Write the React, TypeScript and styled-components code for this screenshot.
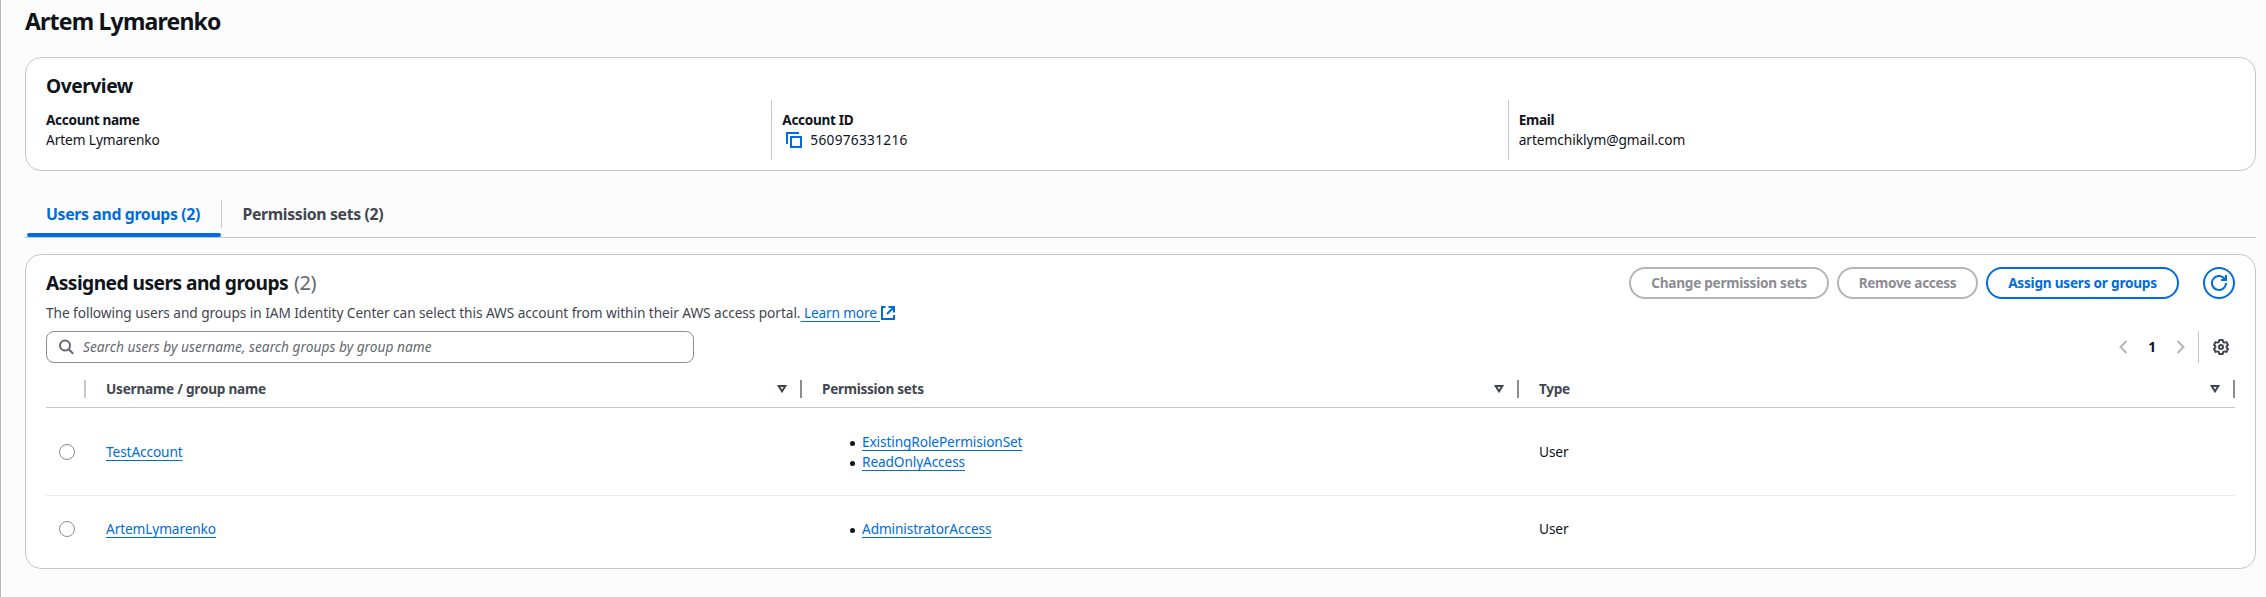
import React from "react";
import styled, { createGlobalStyle } from "styled-components";

const GlobalStyle = createGlobalStyle`
  * { box-sizing: border-box; }
  body {
    margin: 0;
    background: #fcfcfd;
    color: #0f141a;
    font-family: "Noto Sans", "Open Sans", sans-serif;
    font-size: 13.7px;
    line-height: 20px;
    letter-spacing: -0.1px;
  }
  h1, h2, ul { margin: 0; padding: 0; }
`;

const Page = styled.main`
  height: 597px;
  border-left: 1px solid #b9b9c2;
  padding: 6px 10px 0 24px;
  overflow: hidden;
  white-space: nowrap;
`;

const PageTitle = styled.h1`
  font-size: 23px;
  line-height: 30px;
  letter-spacing: -0.8px;
`;

const Card = styled.section<{ $top: number }>`
  margin-top: ${(p) => p.$top}px;
  border: 1px solid #c6c6cd;
  border-radius: 16px;
  background: #fff;
  padding: 0 20px;
`;

const SectionTitle = styled.h2<{ $ls: number }>`
  font-size: 19.2px;
  line-height: 24px;
  letter-spacing: ${(p) => p.$ls}px;
`;

const OverviewCard = styled(Card)`
  padding: 16px 20px 10px;
`;

const Details = styled.div`
  display: grid;
  grid-template-columns: repeat(3, 1fr);
  gap: 20px;
  margin-top: 2px;
`;

const Detail = styled.div`
  padding: 10px 0;
  & + & {
    margin-left: -11px;
    padding-left: 10px;
    border-left: 1px solid #c6c6cd;
  }
`;

const DetailLabel = styled.div`
  font-size: 13.6px;
  font-weight: 700;
  letter-spacing: -0.32px;
`;

const DetailValue = styled.div<{ $ls?: number }>`
  display: flex;
  align-items: center;
  letter-spacing: ${(p) => p.$ls ?? -0.1}px;
  svg { margin: 0 8px 0 4px; }
`;

const Tabs = styled.nav`
  display: flex;
  height: 38px;
  margin-top: 29px;
  padding-left: 2px;
  border-bottom: 1px solid #c6c6cd;
`;

const Tab = styled.div<{ $active?: boolean; $width: number }>`
  width: ${(p) => p.$width}px;
  display: flex;
  flex-direction: column;
  justify-content: space-between;
  font-size: 15.8px;
  font-weight: 700;
  line-height: 28px;
  letter-spacing: -0.34px;
  color: ${(p) => (p.$active ? "#006ce0" : "#424650")};
  &::after {
    content: "";
    height: 4px;
    border-radius: 2px;
    background: ${(p) => (p.$active ? "#006ce0" : "transparent")};
  }
`;

const TabLabel = styled.span<{ $pad: number }>`
  padding-left: ${(p) => p.$pad}px;
`;

const TabDivider = styled.i`
  width: 1px;
  height: 28px;
  background: #c6c6cd;
`;

const TableHeader = styled.header`
  display: flex;
  justify-content: space-between;
  padding-top: 12px;
`;

const HeaderText = styled.div`
  padding-top: 4px;
`;

const Counter = styled.span`
  font-weight: 400;
  font-size: 20px;
  letter-spacing: -0.5px;
  color: #656871;
  margin-left: 6px;
`;

const Description = styled.p`
  margin: 8px 0;
  display: flex;
  align-items: center;
  color: #424650;
  letter-spacing: -0.066px;
`;

const Link = styled.a<{ $ls?: number }>`
  color: #006ce0;
  white-space: pre;
  letter-spacing: ${(p) => p.$ls ?? -0.12}px;
  text-decoration: underline;
  text-decoration-thickness: 1px;
  text-underline-offset: 3px;
  text-decoration-skip-ink: none;
`;

const Actions = styled.div`
  display: flex;
  gap: 8px;
`;

const Button = styled.button<{ $width: number; $disabled?: boolean; $ls?: number }>`
  width: ${(p) => p.$width}px;
  height: 32px;
  padding: 0;
  border: 2px solid ${(p) => (p.$disabled ? "#b4b4bb" : "#006ce0")};
  border-radius: 16px;
  background: #fff;
  color: ${(p) => (p.$disabled ? "#8c8c94" : "#006ce0")};
  font: 700 13.6px/20px "Noto Sans", sans-serif;
  letter-spacing: ${(p) => p.$ls ?? -0.3}px;
  display: flex;
  align-items: center;
  justify-content: center;
`;

const RefreshButton = styled(Button)`
  margin-left: 16px;
`;

const Toolbar = styled.div`
  display: flex;
  justify-content: space-between;
  height: 32px;
`;

const Search = styled.label`
  width: 648px;
  display: flex;
  align-items: center;
  gap: 8px;
  padding-left: 12px;
  border: 1px solid #8c8c94;
  border-radius: 8px;
  color: #656871;
  font-style: italic;
  letter-spacing: 0.03px;
`;

const Pagination = styled.div`
  display: flex;
  align-items: center;
  padding-right: 6px;
`;

const PageNumber = styled.b`
  width: 48px;
  text-align: center;
  font-size: 13.6px;
`;

const ToolbarDivider = styled.i`
  width: 1px;
  height: 32px;
  margin: 0 14px 0 13px;
  background: #c6c6cd;
`;

const Row = styled.div<{ $pad: string; $border?: string }>`
  display: grid;
  grid-template-columns: 40px 716px 717px 1fr;
  align-items: center;
  padding: ${(p) => p.$pad};
  border-bottom: ${(p) => (p.$border ? `1px solid ${p.$border}` : "0")};
`;

const HeadCell = styled.div<{ $ls?: number; $sep?: string }>`
  height: 20px;
  display: flex;
  align-items: center;
  padding-left: 20px;
  font-size: 13.6px;
  font-weight: 700;
  letter-spacing: ${(p) => p.$ls ?? -0.3}px;
  color: #424650;
  svg { margin-left: auto; margin-right: 13px; }
  &::after {
    content: "";
    width: 2px;
    height: 18px;
    background: ${(p) => p.$sep ?? "#8c8c94"};
  }
`;

const SelectHead = styled(HeadCell)`
  padding-left: 0;
  justify-content: flex-end;
`;

const Cell = styled.div`
  padding-left: 20px;
`;

const Radio = styled.span`
  width: 16px;
  height: 16px;
  margin-left: 13px;
  border: 1px solid #8c8c94;
  border-radius: 50%;
  background: #fff;
`;

const Sets = styled.ul`
  list-style: none;
  padding-left: 28px;
`;

const SetItem = styled.li`
  display: flex;
  align-items: center;
  gap: 7px;
  height: 20px;
  &::before {
    content: "";
    width: 5px;
    height: 5px;
    margin-top: 2px;
    border-radius: 50%;
    background: #0f141a;
  }
`;

const CopyIcon = () => (
  <svg width="16" height="16" fill="none" stroke="#006ce0" strokeWidth="2">
    <path d="M1 12V1h12M5 5h10v10H5z" />
  </svg>
);

const ExternalIcon = () => (
  <svg width="16" height="16" fill="none" stroke="#006ce0" strokeWidth="2">
    <path d="M5.500 2H2v12h12V10M8.500 2H14v5.500M14 2 7 9" />
  </svg>
);

const RefreshIcon = () => (
  <svg width="16" height="16" fill="none" stroke="#006ce0" strokeWidth="2">
    <path d="M15 8a7 7 0 1 1-1.6-4.5L15 5M15 0v5h-5" />
  </svg>
);

const SearchIcon = () => (
  <svg width="16" height="16" fill="none" stroke="#656871" strokeWidth="2">
    <circle cx="6" cy="6.500" r="5" />
    <path d="m9.700 10.200 4.500 4.500" />
  </svg>
);

const Chevron = ({ right }: { right?: boolean }) => (
  <svg width="9" height="14" fill="none" stroke="#b4b4bb" strokeWidth="2">
    <path d={right ? "m1.5 1 6 6-6 6" : "m7.5 1-6 6 6 6"} />
  </svg>
);

const GearIcon = () => (
  <svg width="16" height="16" fill="none" stroke="#424650" strokeWidth="2" strokeLinejoin="round">
    <path d="M6.3 1h3.4l.5 2 1.2.6 2-.5 1.6 2.9L13.6 7.4v1.3L15 10l-1.6 2.9-2-.5-1.2.6-.5 2H6.3l-.5-2-1.2-.6-2 .5L1 10l1.4-1.4V7.3L1 6l1.6-2.9 2 .5L5.800 3z" />
    <circle cx="8" cy="8" r="2" />
  </svg>
);

const SortIcon = () => (
  <svg width="10" height="8" fill="none" stroke="#424650" strokeWidth="2">
    <path d="M1.600 1h6.800L5 6.300z" />
  </svg>
);

const rows = [
  { name: "TestAccount", sets: ["ExistingRolePermisionSet", "ReadOnlyAccess"], type: "User", pad: "24px 0 23px", border: "#ebebf0" },
  { name: "ArtemLymarenko", sets: ["AdministratorAccess"], type: "User", pad: "23px 0 29px" },
];

export default function App() {
  return (
    <Page>
      <GlobalStyle />
      <PageTitle>Artem Lymarenko</PageTitle>

      <OverviewCard $top={21}>
        <SectionTitle $ls={-0.45}>Overview</SectionTitle>
        <Details>
          <Detail>
            <DetailLabel>Account name</DetailLabel>
            <DetailValue>Artem Lymarenko</DetailValue>
          </Detail>
          <Detail>
            <DetailLabel>Account ID</DetailLabel>
            <DetailValue $ls={0.28}><CopyIcon />560976331216</DetailValue>
          </Detail>
          <Detail>
            <DetailLabel>Email</DetailLabel>
            <DetailValue $ls={-0.04}>artemchiklym@gmail.com</DetailValue>
          </Detail>
        </Details>
      </OverviewCard>

      <Tabs>
        <Tab $active $width={194}><TabLabel $pad={19}>Users and groups (2)</TabLabel></Tab>
        <TabDivider />
        <Tab $width={182}><TabLabel $pad={20.5}>Permission sets (2)</TabLabel></Tab>
      </Tabs>

      <Card $top={16}>
        <TableHeader>
          <HeaderText>
            <SectionTitle $ls={-0.55}>
              Assigned users and groups<Counter>(2)</Counter>
            </SectionTitle>
            <Description>
              The following users and groups in IAM Identity Center can select this AWS account from within their AWS access portal.
              <Link $ls={-0.16}>{" Learn more "}</Link>
              <ExternalIcon />
            </Description>
          </HeaderText>
          <Actions>
            <Button $disabled $width={200} $ls={-0.26}>Change permission sets</Button>
            <Button $disabled $width={141} $ls={-0.33}>Remove access</Button>
            <Button $width={193} $ls={-0.22}>Assign users or groups</Button>
            <RefreshButton $width={32} aria-label="Refresh"><RefreshIcon /></RefreshButton>
          </Actions>
        </TableHeader>

        <Toolbar>
          <Search><SearchIcon />Search users by username, search groups by group name</Search>
          <Pagination>
            <Chevron />
            <PageNumber>1</PageNumber>
            <Chevron right />
            <ToolbarDivider />
            <GearIcon />
          </Pagination>
        </Toolbar>

        <Row $pad="16px 0 8px" $border="#c6c6cd">
          <SelectHead $sep="#c6c6cd" />
          <HeadCell $ls={-0.22}>Username / group name<SortIcon /></HeadCell>
          <HeadCell>Permission sets<SortIcon /></HeadCell>
          <HeadCell>Type<SortIcon /></HeadCell>
        </Row>
        {rows.map((r) => (
          <Row key={r.name} $pad={r.pad} $border={r.border}>
            <Radio />
            <Cell><Link>{r.name}</Link></Cell>
            <Cell>
              <Sets>
                {r.sets.map((s) => <SetItem key={s}><Link>{s}</Link></SetItem>)}
              </Sets>
            </Cell>
            <Cell>{r.type}</Cell>
          </Row>
        ))}
      </Card>
    </Page>
  );
}
